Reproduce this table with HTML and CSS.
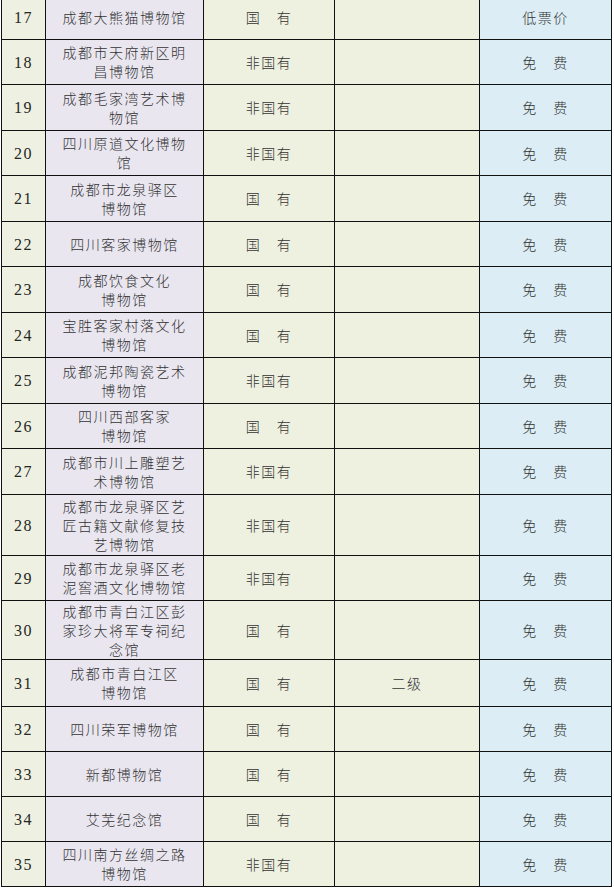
FILE: index.html
```html
<!DOCTYPE html>
<html lang="zh-CN">
<head>
<meta charset="utf-8">
<title>博物馆列表</title>
<link rel="stylesheet" href="styles.css">
</head>
<body>
<div class="sheet">
<table class="museums">
  <colgroup>
    <col class="c-num"><col class="c-name"><col class="c-own"><col class="c-lvl"><col class="c-price">
  </colgroup>
  <tbody>
    <tr class="h45"><td class="num">17</td><td class="name">成都大熊猫博物馆</td><td class="own">国　有</td><td class="lvl"></td><td class="price">低票价</td></tr>
    <tr class="h45"><td class="num">18</td><td class="name">成都市天府新区明<br>昌博物馆</td><td class="own">非国有</td><td class="lvl"></td><td class="price">免　费</td></tr>
    <tr class="h46"><td class="num">19</td><td class="name">成都毛家湾艺术博<br>物馆</td><td class="own">非国有</td><td class="lvl"></td><td class="price">免　费</td></tr>
    <tr class="h45"><td class="num">20</td><td class="name">四川原道文化博物<br>馆</td><td class="own">非国有</td><td class="lvl"></td><td class="price">免　费</td></tr>
    <tr class="h46"><td class="num">21</td><td class="name">成都市龙泉驿区<br>博物馆</td><td class="own">国　有</td><td class="lvl"></td><td class="price">免　费</td></tr>
    <tr class="h45"><td class="num">22</td><td class="name">四川客家博物馆</td><td class="own">国　有</td><td class="lvl"></td><td class="price">免　费</td></tr>
    <tr class="h46"><td class="num">23</td><td class="name">成都饮食文化<br>博物馆</td><td class="own">国　有</td><td class="lvl"></td><td class="price">免　费</td></tr>
    <tr class="h45"><td class="num">24</td><td class="name">宝胜客家村落文化<br>博物馆</td><td class="own">国　有</td><td class="lvl"></td><td class="price">免　费</td></tr>
    <tr class="h46"><td class="num">25</td><td class="name">成都泥邦陶瓷艺术<br>博物馆</td><td class="own">非国有</td><td class="lvl"></td><td class="price">免　费</td></tr>
    <tr class="h45"><td class="num">26</td><td class="name">四川西部客家<br>博物馆</td><td class="own">国　有</td><td class="lvl"></td><td class="price">免　费</td></tr>
    <tr class="h46"><td class="num">27</td><td class="name">成都市川上雕塑艺<br>术博物馆</td><td class="own">非国有</td><td class="lvl"></td><td class="price">免　费</td></tr>
    <tr class="h61"><td class="num">28</td><td class="name">成都市龙泉驿区艺<br>匠古籍文献修复技<br>艺博物馆</td><td class="own">非国有</td><td class="lvl"></td><td class="price">免　费</td></tr>
    <tr class="h45"><td class="num">29</td><td class="name">成都市龙泉驿区老<br>泥窖酒文化博物馆</td><td class="own">非国有</td><td class="lvl"></td><td class="price">免　费</td></tr>
    <tr class="h59"><td class="num">30</td><td class="name">成都市青白江区彭<br>家珍大将军专祠纪<br>念馆</td><td class="own">国　有</td><td class="lvl"></td><td class="price">免　费</td></tr>
    <tr class="h47"><td class="num">31</td><td class="name">成都市青白江区<br>博物馆</td><td class="own">国　有</td><td class="lvl">二级</td><td class="price">免　费</td></tr>
    <tr class="h45"><td class="num">32</td><td class="name">四川荣军博物馆</td><td class="own">国　有</td><td class="lvl"></td><td class="price">免　费</td></tr>
    <tr class="h45"><td class="num">33</td><td class="name">新都博物馆</td><td class="own">国　有</td><td class="lvl"></td><td class="price">免　费</td></tr>
    <tr class="h45"><td class="num">34</td><td class="name">艾芜纪念馆</td><td class="own">国　有</td><td class="lvl"></td><td class="price">免　费</td></tr>
    <tr class="h45"><td class="num">35</td><td class="name">四川南方丝绸之路<br>博物馆</td><td class="own">非国有</td><td class="lvl"></td><td class="price">免　费</td></tr>
  </tbody>
</table>
</div>
</body>
</html>
```
FILE: styles.css
```css
html, body {
  margin: 0;
  padding: 0;
  background: #ffffff;
}

.sheet {
  width: 614px;
  height: 889px;
  overflow: hidden;
}

.museums {
  border-collapse: collapse;
  table-layout: fixed;
  width: 611px;
  margin: -6px 0 0 1px;
  font-family: "Noto Sans CJK SC", "Liberation Serif", sans-serif;
  font-size: 14px;
  color: #333333;
}

.c-num { width: 44px; }
.c-name { width: 158px; }
.c-own { width: 131px; }
.c-lvl { width: 145px; }
.c-price { width: 132px; }

.museums td {
  border: 1px solid #111111;
  padding: 0 6px;
  text-align: center;
  vertical-align: middle;
  line-height: 19px;
  letter-spacing: 1.5px;
  font-weight: 300;
}

.h45 td { height: 44px; }
.h46 td { height: 45px; }
.h47 td { height: 46px; }
.h59 td { height: 58px; }
.h61 td { height: 60px; }

.num {
  background: #eef1e1;
  font-family: "Liberation Serif", serif;
  font-size: 16px;
  letter-spacing: 0;
  color: #262626;
}

.museums td.num {
  font-weight: 400;
}

.name {
  background: #e9e6f0;
}

.own,
.lvl {
  background: #eef0e0;
}

.price {
  background: #dcedf5;
}
```
